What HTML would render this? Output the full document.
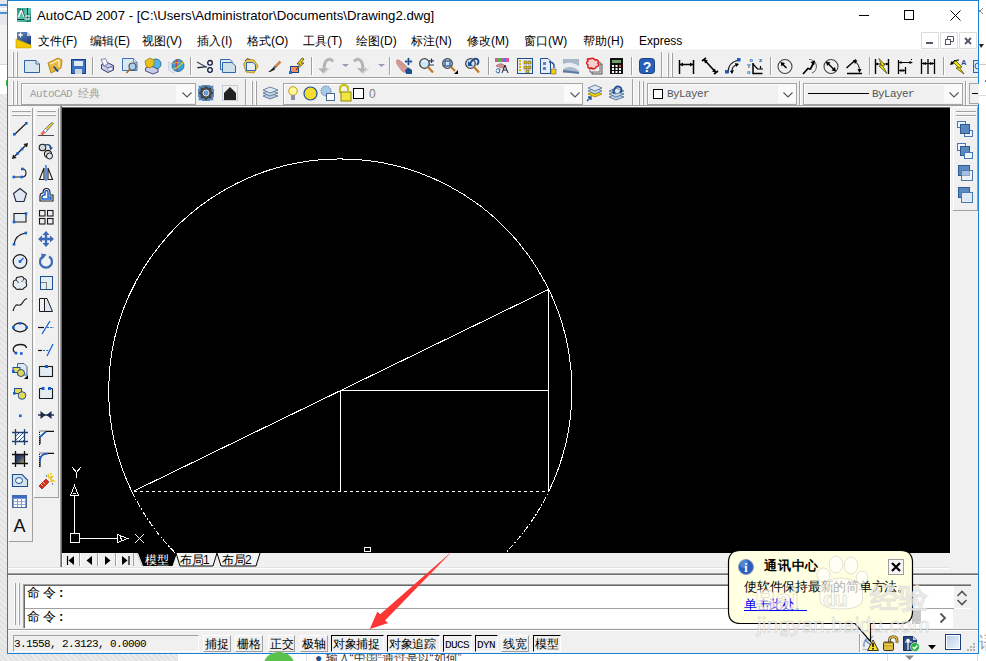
<!DOCTYPE html>
<html><head><meta charset="utf-8">
<style>
*{box-sizing:border-box;margin:0;padding:0}
html,body{width:986px;height:661px;overflow:hidden;background:#fff;font-family:"Liberation Sans",sans-serif;position:relative}
.a{position:absolute}
.t{white-space:nowrap;line-height:1}
svg{overflow:visible}
</style></head><body>

<div class="a" style="left:0px;top:0px;width:7px;height:661px;background:repeating-linear-gradient(45deg,#e2e2e2 0 2px,#ececec 2px 4px)"></div>
<div class="a" style="left:0px;top:0px;width:7px;height:25px;background:#e6e8ec"></div>
<div class="a" style="left:0px;top:25px;width:7px;height:39px;background:#f2f2f2"></div>
<div class="a" style="left:0px;top:64px;width:7px;height:30px;background:#fff"></div>
<div class="a" style="left:0px;top:64px;width:7px;height:1px;background:#d8d8d8"></div>
<div class="a" style="left:6px;top:80px;width:1px;height:6px;background:#3cb44a"></div>
<div class="a" style="left:0px;top:654px;width:178px;height:7px;background:repeating-linear-gradient(45deg,#e2e2e2 0 2px,#ececec 2px 4px)"></div>
<div class="a" style="left:0px;top:4px;width:7px;height:2px;background:#4a90d9"></div>
<div class="a" style="left:0px;top:8px;width:7px;height:2px;background:#fff"></div>
<div class="a" style="left:0px;top:12px;width:7px;height:2px;background:#4a90d9"></div>
<div class="a" style="left:979px;top:0px;width:7px;height:654px;background:#fff"></div>
<svg class="a" style="left:979px;top:8px" width="5" height="7" viewBox="0 0 5 7" ><path d="M-2 0 L4 6 M4 0 L-2 6" stroke="#888" stroke-width="1"/></svg>
<svg class="a" style="left:979px;top:44px" width="5" height="5" viewBox="0 0 5 5" ><path d="M0 0 H5 L2 4 Z" fill="#222"/></svg>
<div class="a" style="left:979px;top:64px;width:7px;height:1px;background:#ccc"></div>
<div class="a" style="left:979px;top:95px;width:7px;height:1px;background:#ddd"></div>
<div class="a" style="left:985px;top:80px;width:1px;height:2px;background:#e44"></div>
<div class="a" style="left:7px;top:0px;width:972px;height:654px;background:#f0f0f0"></div>
<div class="a" style="left:8px;top:1px;width:970px;height:48px;background:#fff"></div>
<div class="a" style="left:7px;top:0px;width:972px;height:1px;background:#1883d7"></div>
<div class="a" style="left:7px;top:0px;width:1px;height:654px;background:#1883d7"></div>
<div class="a" style="left:978px;top:0px;width:1px;height:654px;background:#1883d7"></div>
<div class="a" style="left:7px;top:653px;width:972px;height:1px;background:#1883d7"></div>
<svg class="a" style="left:17px;top:8px" width="14" height="14" viewBox="0 0 14 14" ><defs><linearGradient id="tg" x1="0" y1="0" x2="1" y2="1"><stop offset="0" stop-color="#1f8f7e"/><stop offset="0.5" stop-color="#5cc8b4"/><stop offset="1" stop-color="#1a8070"/></linearGradient></defs><rect x="0" y="0" width="14" height="14" fill="url(#tg)"/><path d="M1.5 9 L4.5 2 L7.5 9" stroke="#fff" stroke-width="1.6" fill="none"/><path d="M3 2 L5 1 L8 9" stroke="#0a3a30" stroke-width="0.8" fill="none"/><path d="M0 11.5 H7 M10.5 0 V7 M10.5 13 V14 M8 9.5 H14" stroke="#0a3a30" stroke-width="1"/><rect x="8.5" y="7.5" width="4" height="4" fill="#fff"/><rect x="9.5" y="8.5" width="2" height="2" fill="#0a3a30"/></svg>
<div class="a t" style="left:37px;top:9px;font-size:13.2px;color:#000">AutoCAD 2007 - [C:\Users\Administrator\Documents\Drawing2.dwg]</div>
<div class="a" style="left:859px;top:15px;width:10px;height:1px;background:#000"></div>
<div class="a" style="left:904px;top:10px;width:10px;height:10px;border:1px solid #000"></div>
<svg class="a" style="left:950px;top:10px" width="11" height="11" viewBox="0 0 11 11" ><path d="M0.5 0.5 L10.5 10.5 M10.5 0.5 L0.5 10.5" stroke="#000" stroke-width="1"/></svg>
<svg class="a" style="left:16px;top:32px" width="15" height="16" viewBox="0 0 15 16" ><defs><linearGradient id="mg" x1="0" y1="0" x2="0.6" y2="1"><stop offset="0" stop-color="#6a8ec0"/><stop offset="1" stop-color="#1d3f80"/></linearGradient></defs><path d="M1 0 H11 L15 4 V13 H1 Z" fill="url(#mg)"/><path d="M11 0 V4 H15 Z" fill="#c8d0dc"/><path d="M4.5 0.5 V5.5 M2 3 H7" stroke="#fff" stroke-width="1"/><circle cx="4.5" cy="3" r="1.3" fill="#fff"/><path d="M0 7 L15 13 V16 H0 Z" fill="#f2c800" stroke="#c09a00" stroke-width="0.6"/></svg>
<div class="a t" style="left:38px;top:35px;font-size:12px;color:#000">文件(F)</div>
<div class="a t" style="left:90px;top:35px;font-size:12px;color:#000">编辑(E)</div>
<div class="a t" style="left:142px;top:35px;font-size:12px;color:#000">视图(V)</div>
<div class="a t" style="left:197px;top:35px;font-size:12px;color:#000">插入(I)</div>
<div class="a t" style="left:247px;top:35px;font-size:12px;color:#000">格式(O)</div>
<div class="a t" style="left:303px;top:35px;font-size:12px;color:#000">工具(T)</div>
<div class="a t" style="left:356px;top:35px;font-size:12px;color:#000">绘图(D)</div>
<div class="a t" style="left:411px;top:35px;font-size:12px;color:#000">标注(N)</div>
<div class="a t" style="left:467px;top:35px;font-size:12px;color:#000">修改(M)</div>
<div class="a t" style="left:524px;top:35px;font-size:12px;color:#000">窗口(W)</div>
<div class="a t" style="left:583px;top:35px;font-size:12px;color:#000">帮助(H)</div>
<div class="a t" style="left:639px;top:35px;font-size:12px;color:#000">Express</div>
<div class="a" style="left:921px;top:32px;width:18px;height:17px;background:#fff;border:1px solid #dcdcdc"></div>
<div class="a" style="left:940px;top:32px;width:18px;height:17px;background:#fff;border:1px solid #dcdcdc"></div>
<div class="a" style="left:959px;top:32px;width:18px;height:17px;background:#fff;border:1px solid #dcdcdc"></div>
<div class="a" style="left:926px;top:42px;width:7px;height:2px;background:#556"></div>
<svg class="a" style="left:945px;top:36px" width="9" height="9" viewBox="0 0 9 9" ><rect x="0.5" y="3.5" width="5" height="5" fill="none" stroke="#556" stroke-width="1"/><path d="M2.5 3.5 V0.5 H8.5 V5.5 H5.5" fill="none" stroke="#556"/></svg>
<svg class="a" style="left:964px;top:37px" width="8" height="8" viewBox="0 0 8 8" ><path d="M1 1 L7 7 M7 1 L1 7" stroke="#556" stroke-width="1.8"/></svg>
<div class="a" style="left:8px;top:49px;width:970px;height:59px;background:#f0f0f0"></div>
<div class="a" style="left:8px;top:49px;width:970px;height:1px;background:#f7f7f7"></div>
<div class="a" style="left:8px;top:77px;width:970px;height:1px;background:#a0a0a0"></div>
<div class="a" style="left:8px;top:78px;width:970px;height:1px;background:#fff"></div>
<div class="a" style="left:8px;top:105px;width:970px;height:1px;background:#a0a0a0"></div>
<div class="a" style="left:8px;top:106px;width:970px;height:2px;background:#f7f7f7"></div>
<div class="a" style="left:12px;top:52px;width:1px;height:25px;background:#fff"></div>
<div class="a" style="left:13px;top:52px;width:1px;height:25px;background:#a0a0a0"></div>
<div class="a" style="left:16px;top:52px;width:1px;height:25px;background:#fff"></div>
<div class="a" style="left:17px;top:52px;width:1px;height:25px;background:#a0a0a0"></div>
<svg class="a" style="left:24px;top:60px" width="16" height="16" viewBox="0 0 16 16" ><path d="M0.5 0.5 H12 L15.5 4 V12.5 H0.5 Z" fill="#d8e8ee" stroke="#2f64ad"/><path d="M12 0.5 V4 H15.5" fill="#fff" stroke="#2f64ad"/></svg>
<svg class="a" style="left:47px;top:58px" width="16" height="16" viewBox="0 0 16 16" ><path d="M1 5 L11 0 L15 2 L14 10 L4 15 Z" fill="#e9b93c" stroke="#b8891a"/><path d="M3 6 L12 2 L12 9" fill="none" stroke="#fff"/><path d="M6 9 Q8 7 9 10 L12 13 L10 14 Z" fill="#1f4e8a"/></svg>
<svg class="a" style="left:71px;top:59px" width="16" height="16" viewBox="0 0 16 16" ><rect x="0.5" y="0.5" width="14" height="14" fill="#3b72c4" stroke="#1d3f8a"/><rect x="3" y="2" width="9" height="5" fill="#dfe9f5"/><rect x="4" y="10" width="7" height="5" fill="#cfd8e0"/></svg>
<div class="a" style="left:92px;top:57px;width:1px;height:18px;background:#a0a0a0"></div>
<div class="a" style="left:93px;top:57px;width:1px;height:18px;background:#fff"></div>
<svg class="a" style="left:100px;top:58px" width="16" height="16" viewBox="0 0 16 16" ><path d="M1.5 6.5 L6 4 L13.5 7.5 L13.5 12 L8 14.5 L1.5 11 Z" fill="#c8cce8" stroke="#3a3f78" stroke-width="1"/><path d="M2 6.5 L8 10 L13.5 7.5" fill="none" stroke="#5a5f98" stroke-width="0.8"/><path d="M1 1.5 L5.5 0.5 L8 6 L4 8 Z" fill="#f4f4fa" stroke="#6a6fa0" stroke-width="0.8"/><path d="M7 11 L12 9 L13 11.5 L9 13 Z" fill="#fff" stroke="#6a6fa0" stroke-width="0.6"/></svg>
<svg class="a" style="left:122px;top:58px" width="16" height="16" viewBox="0 0 16 16" ><path d="M0.5 0.5 H11.5 L15 4 V12.5 H0.5 Z" fill="#dae8f0" stroke="#3a72b8"/><path d="M11.5 0.5 V4 H15" fill="#fff" stroke="#3a72b8" stroke-width="0.8"/><circle cx="10.5" cy="8.5" r="3.5" fill="#a8d0f0" stroke="#555" stroke-width="1.2"/><path d="M8 11 L4.5 15" stroke="#b06a28" stroke-width="1.8"/></svg>
<svg class="a" style="left:145px;top:58px" width="16" height="16" viewBox="0 0 16 16" ><circle cx="11" cy="6" r="5" fill="#50b8e8" stroke="#2a5a80" stroke-width="0.8"/><path d="M0.5 10 L6 8 L13 11 L13 14 L8 16 L0.5 13 Z" fill="#c8cce8" stroke="#3a3f78" stroke-width="0.9"/><path d="M0 3 L5 0 L9 2 L9 7 L5 10 L1 8 Z" fill="#e8c020" stroke="#a08000" stroke-width="0.8"/></svg>
<svg class="a" style="left:168px;top:58px" width="16" height="16" viewBox="0 0 16 16" ><path d="M0.5 4 L6 7 V15.5 L0.5 12 Z" fill="#dde6f4" stroke="#b8c4d8" stroke-width="0.6"/><circle cx="10" cy="7.5" r="6" fill="#3aa0d8" stroke="#1a5a90" stroke-width="0.8"/><path d="M9 1.5 Q7 8 10 13.5" stroke="#d83030" stroke-width="1.1" fill="none"/><path d="M4.5 6 Q10 3 15.5 6" stroke="#f0a030" stroke-width="1.1" fill="none"/><path d="M5 11 Q11 10 15 4" stroke="#c8e020" stroke-width="1.1" fill="none"/></svg>
<div class="a" style="left:190px;top:57px;width:1px;height:18px;background:#a0a0a0"></div>
<div class="a" style="left:191px;top:57px;width:1px;height:18px;background:#fff"></div>
<svg class="a" style="left:197px;top:60px" width="16" height="16" viewBox="0 0 16 16" ><path d="M0 2 L10 7.5 M0 7.5 L10 7" stroke="#334060" stroke-width="1.1"/><path d="M1 7 L10 6.5 L1 8.5 Z" fill="#223"/><circle cx="13" cy="2.8" r="2.3" fill="none" stroke="#111a40" stroke-width="1.3"/><circle cx="13" cy="10" r="2.3" fill="none" stroke="#111a40" stroke-width="1.3"/></svg>
<svg class="a" style="left:220px;top:59px" width="16" height="16" viewBox="0 0 16 16" ><path d="M0.5 0.5 H10 L12 2.5 V10.5 H0.5 Z" fill="#e0ecf0" stroke="#2f64ad"/><path d="M2.5 3.5 H12 L15.5 7 V13.5 H2.5 Z" fill="#cfe0e8" stroke="#2f64ad"/></svg>
<svg class="a" style="left:243px;top:58px" width="16" height="16" viewBox="0 0 16 16" ><path d="M4 1 L11 2 L15 8 L11 15 L3 14 L0.5 6 Z" fill="#e8c858" stroke="#b89020" stroke-width="0.9"/><path d="M2 3 L4 0.5 L7 1.5" stroke="#444" fill="none" stroke-width="0.8"/><path d="M3.5 4.5 H10 L12.5 7 V12.5 H3.5 Z" fill="#e4f0f4" stroke="#2f64ad"/></svg>
<svg class="a" style="left:268px;top:61px" width="16" height="16" viewBox="0 0 16 16" ><path d="M12.5 0.5 L7 6" stroke="#c88848" stroke-width="2.6"/><path d="M7.5 5.5 L5.5 7.5" stroke="#3a5a70" stroke-width="2"/><path d="M5.5 6.5 L1 10.5 L0 11 L2 11 L7 8.5 Z" fill="#1a1a1a"/></svg>
<svg class="a" style="left:289px;top:58px" width="16" height="16" viewBox="0 0 16 16" ><rect x="1.5" y="8.5" width="8" height="6" fill="#f89058" stroke="#1d3f8a"/><rect x="0" y="13" width="3" height="3" fill="#1070e0"/><path d="M13 0 L8 6 H11 L7 12 L15 5 H12 L15 1 Z" fill="#f0d000" stroke="#333" stroke-width="0.7"/></svg>
<div class="a" style="left:311px;top:57px;width:1px;height:18px;background:#a0a0a0"></div>
<div class="a" style="left:312px;top:57px;width:1px;height:18px;background:#fff"></div>
<svg class="a" style="left:318px;top:58px" width="16" height="16" viewBox="0 0 16 16" ><path d="M15 3.5 Q12 -0.5 8.5 2.5 Q6 5 6.2 10.5" stroke="#b4b4b8" stroke-width="3" fill="none"/><path d="M0 10.5 L12 10 L6 16 Z" fill="#b4b4b8"/><path d="M6 15 L11 10" stroke="#fff" stroke-width="0.8"/></svg>
<svg class="a" style="left:342px;top:64px" width="7" height="4" viewBox="0 0 7 4" ><path d="M0 0 H7 L3.5 3 Z" fill="#9a9ab8"/></svg>
<svg class="a" style="left:353px;top:58px" width="16" height="16" viewBox="0 0 16 16" ><path d="M1 3.5 Q4 -0.5 7.5 2.5 Q10 5 9.8 10.5" stroke="#b4b4b8" stroke-width="3" fill="none"/><path d="M16 10.5 L4 10 L10 16 Z" fill="#b4b4b8"/><path d="M10 15 L15 10" stroke="#fff" stroke-width="0.8"/></svg>
<svg class="a" style="left:378px;top:64px" width="7" height="4" viewBox="0 0 7 4" ><path d="M0 0 H7 L3.5 3 Z" fill="#9a9ab8"/></svg>
<div class="a" style="left:389px;top:57px;width:1px;height:18px;background:#a0a0a0"></div>
<div class="a" style="left:390px;top:57px;width:1px;height:18px;background:#fff"></div>
<svg class="a" style="left:396px;top:58px" width="16" height="16" viewBox="0 0 16 16" ><path d="M0.5 3 Q1 1 3 2 L10 8 L12 10 L10 14 Q8 15 6 13 L1 6 Z" fill="#d8a09a" stroke="#b07870" stroke-width="0.7"/><path d="M2 4 L8 9 M3.5 2.8 L9.5 7.8" stroke="#b07870" stroke-width="0.5"/><path d="M9 12 L12.5 9.5 L16 12 V16 H10 Z" fill="#1d4f91"/><path d="M12.5 0 V7 M9 3.5 H16" stroke="#1d4f91" stroke-width="1.3"/><path d="M12.5 -0.5 L11 1.5 H14 Z M12.5 7.5 L11 5.5 H14 Z M8.5 3.5 L10.5 2 V5 Z M16.5 3.5 L14.5 2 V5 Z" fill="#1d4f91"/></svg>
<svg class="a" style="left:419px;top:58px" width="16" height="16" viewBox="0 0 16 16" ><circle cx="5.5" cy="5.5" r="4.8" fill="#cfe4f5" stroke="#444" stroke-width="1.3"/><path d="M3 3.5 Q5 2 7 3" stroke="#fff" fill="none"/><path d="M8.8 8.8 L14 14.5" stroke="#c07828" stroke-width="2.2"/><path d="M12.5 0.5 V5 M10 2.8 H15 M10 7 H15" stroke="#1d3f70" stroke-width="1.2"/></svg>
<svg class="a" style="left:442px;top:58px" width="16" height="16" viewBox="0 0 16 16" ><circle cx="5.5" cy="5.5" r="4.8" fill="#cfe4f5" stroke="#444" stroke-width="1.3"/><rect x="3" y="3" width="5" height="5" fill="none" stroke="#1d4f91" stroke-width="1.2"/><path d="M8.8 8.8 L13 13" stroke="#c07828" stroke-width="2.2"/><path d="M12 16 L16 12 V16 Z" fill="#000"/></svg>
<svg class="a" style="left:465px;top:58px" width="16" height="16" viewBox="0 0 16 16" ><circle cx="5.5" cy="5.5" r="4.8" fill="#cfe4f5" stroke="#444" stroke-width="1.3"/><path d="M8.8 8.8 L14 14.5" stroke="#c07828" stroke-width="2.2"/><path d="M5 6 Q8 0 12 1 Q15 3 12 7" stroke="#1d4f91" stroke-width="2" fill="none"/><path d="M3 3 L8 8 L3 8 Z" fill="#1d4f91"/></svg>
<div class="a" style="left:488px;top:57px;width:1px;height:18px;background:#a0a0a0"></div>
<div class="a" style="left:489px;top:57px;width:1px;height:18px;background:#fff"></div>
<svg class="a" style="left:494px;top:58px" width="16" height="16" viewBox="0 0 16 16" ><rect x="1" y="0" width="14" height="4" fill="#e050a0"/><rect x="4" y="0" width="3" height="4" fill="#40c040"/><rect x="9" y="0" width="3" height="4" fill="#4080f0"/><path d="M2 8 Q6 4 10 7 L12 9 L9 10 Z" fill="#d89090" stroke="#905050" stroke-width="0.6"/><path d="M2 12 Q3 10 6 11 L5 15 Q2 15 2 13" fill="none" stroke="#2f64ad"/><path d="M8 15 L11 7 L14 15 M9 12 H13" stroke="#223" fill="none"/></svg>
<svg class="a" style="left:517px;top:58px" width="16" height="16" viewBox="0 0 16 16" ><rect x="0.5" y="0.5" width="15" height="15" fill="#e8eef8" stroke="#1d4f91"/><path d="M3 2 V14" stroke="#e8b000" stroke-width="2" stroke-dasharray="2 1"/><rect x="7" y="3" width="3" height="3" fill="#e8c000" stroke="#445" stroke-width="0.5"/><rect x="11" y="3" width="3" height="3" fill="#e8c000" stroke="#445" stroke-width="0.5"/><rect x="7" y="8" width="3" height="3" fill="#e8c000" stroke="#445" stroke-width="0.5"/><rect x="11" y="8" width="3" height="3" fill="#e8c000" stroke="#445" stroke-width="0.5"/><rect x="9" y="12" width="3" height="3" fill="#e8c000" stroke="#445" stroke-width="0.5"/></svg>
<svg class="a" style="left:540px;top:58px" width="16" height="16" viewBox="0 0 16 16" ><path d="M0.5 0.5 H8 L10.5 3 V15.5 H0.5 Z" fill="#e8eef8" stroke="#1d4f91"/><rect x="3" y="4" width="3" height="3" fill="#6080c0"/><rect x="3" y="9" width="3" height="3" fill="#6080c0"/><path d="M9 4 Q15 4 14 10" stroke="#1d4f91" stroke-width="1.5" fill="none"/><rect x="11" y="11" width="5" height="5" fill="#f0d000" stroke="#665" stroke-width="0.6"/></svg>
<svg class="a" style="left:563px;top:58px" width="16" height="16" viewBox="0 0 16 16" ><rect x="0" y="1" width="16" height="14" fill="#a8b8c8"/><path d="M0 6 Q8 2 16 8 L16 13 Q8 6 0 11 Z" fill="#e8eef4"/><path d="M0 13 L16 15" stroke="#5a7aa0" stroke-width="2"/></svg>
<svg class="a" style="left:586px;top:58px" width="16" height="16" viewBox="0 0 16 16" ><rect x="6" y="6" width="10" height="10" fill="#ddd" stroke="#333" stroke-width="0.8"/><rect x="4" y="4" width="10" height="10" fill="#eee" stroke="#555" stroke-width="0.8"/><path d="M2 3 Q0 0 4 1 Q7 -1 9 2 Q13 1 12 5 Q14 8 10 9 Q9 12 5 10 Q1 11 2 7 Q-1 5 2 3 Z" fill="#f4d0d0" stroke="#e01010" stroke-width="1.4"/></svg>
<svg class="a" style="left:609px;top:58px" width="16" height="16" viewBox="0 0 16 16" ><rect x="1" y="0" width="13" height="16" fill="#111"/><rect x="3" y="2" width="9" height="3" fill="#70a070"/><g fill="#fff"><rect x="3" y="7" width="2" height="2"/><rect x="6.5" y="7" width="2" height="2"/><rect x="10" y="7" width="2" height="2" fill="#f44"/><rect x="3" y="10" width="2" height="2"/><rect x="6.5" y="10" width="2" height="2"/><rect x="10" y="10" width="2" height="2"/><rect x="3" y="13" width="2" height="2"/><rect x="6.5" y="13" width="2" height="2"/><rect x="10" y="13" width="2" height="2"/></g></svg>
<div class="a" style="left:631px;top:57px;width:1px;height:18px;background:#a0a0a0"></div>
<div class="a" style="left:632px;top:57px;width:1px;height:18px;background:#fff"></div>
<svg class="a" style="left:639px;top:58px" width="16" height="16" viewBox="0 0 16 16" ><rect x="0.5" y="0.5" width="15" height="15" rx="3" fill="#2760b8" stroke="#1a3f80"/><text x="8" y="13.5" font-family="Liberation Sans" font-weight="bold" font-size="14" fill="#fff" text-anchor="middle">?</text></svg>
<div class="a" style="left:661px;top:52px;width:1px;height:25px;background:#a0a0a0"></div>
<div class="a" style="left:662px;top:52px;width:1px;height:25px;background:#fff"></div>
<div class="a" style="left:667px;top:53px;width:1px;height:24px;background:#fff"></div>
<div class="a" style="left:668px;top:53px;width:1px;height:24px;background:#a0a0a0"></div>
<div class="a" style="left:671px;top:53px;width:1px;height:24px;background:#fff"></div>
<div class="a" style="left:672px;top:53px;width:1px;height:24px;background:#a0a0a0"></div>
<svg class="a" style="left:678px;top:58px" width="16" height="16" viewBox="0 0 16 16" ><path d="M1.5 2 V16 M15.5 2 V16 M1.5 6.5 H15.5" stroke="#000" stroke-width="1.5"/><path d="M2 6.5 L5 4.5 V8.5 Z M15 6.5 L12 4.5 V8.5 Z" fill="#000"/></svg>
<svg class="a" style="left:702px;top:58px" width="16" height="16" viewBox="0 0 16 16" ><path d="M0 3 L4 0 M12 16 L16 13 M2 1.5 L14 14.5" stroke="#000" stroke-width="1.6"/><path d="M2 1.5 L6 2.5 L3 5.5 Z M14 14.5 L10 13.5 L13 10.5 Z" fill="#000"/></svg>
<svg class="a" style="left:725px;top:58px" width="16" height="16" viewBox="0 0 16 16" ><path d="M3 15 Q3 4 14 2" stroke="#222" stroke-width="1.2" fill="none"/><path d="M7 15 Q6 8 13 6" stroke="#222" stroke-width="1.2" fill="none"/><rect x="0" y="12" width="3.5" height="3.5" fill="#1858c8"/><rect x="12" y="0" width="3.5" height="3.5" fill="#1858c8"/><path d="M10 5 L14 6 L11 9 Z M5 13 L7 16 L9 12 Z" fill="#000"/></svg>
<svg class="a" style="left:747px;top:58px" width="16" height="16" viewBox="0 0 16 16" ><path d="M6 5 V15.5 H15.5" stroke="#000" stroke-width="1.5" fill="none"/><path d="M6 6 L10.5 11 H16 M13.5 8 V11.5" stroke="#000" stroke-width="1.2" fill="none"/><g fill="#1d4f91" font-size="5.5" font-weight="bold" font-family="Liberation Sans"><text x="2.5" y="4">o</text><text x="12" y="4">x</text><text x="0" y="10">Y</text><text x="0" y="16">o</text></g></svg>
<div class="a" style="left:770px;top:57px;width:1px;height:18px;background:#a0a0a0"></div>
<div class="a" style="left:771px;top:57px;width:1px;height:18px;background:#fff"></div>
<svg class="a" style="left:777px;top:58px" width="16" height="16" viewBox="0 0 16 16" ><circle cx="8" cy="8.5" r="7" fill="none" stroke="#444" stroke-width="1.1"/><path d="M9.5 10 L4.5 5" stroke="#000" stroke-width="1.5"/><path d="M3.5 4 L8 5 L4.5 8.5 Z" fill="#000"/></svg>
<svg class="a" style="left:801px;top:58px" width="16" height="16" viewBox="0 0 16 16" ><path d="M8 1.5 A7 7 0 0 1 11 15" stroke="#666" stroke-width="1.1" fill="none"/><path d="M2 16 L7 10.5 L9.5 11 L13 4" stroke="#000" stroke-width="1.7" fill="none"/><path d="M14 2.5 L9.5 4 L13 7.5 Z" fill="#000"/></svg>
<svg class="a" style="left:823px;top:58px" width="16" height="16" viewBox="0 0 16 16" ><circle cx="8" cy="8.5" r="7" fill="none" stroke="#444" stroke-width="1.1"/><path d="M4 4.5 L12 12.5" stroke="#000" stroke-width="1.5"/><path d="M3 3.5 L7.5 4.5 L4 8 Z M13 13.5 L8.5 12.5 L12 9 Z" fill="#000"/></svg>
<svg class="a" style="left:846px;top:58px" width="16" height="16" viewBox="0 0 16 16" ><path d="M0.5 10 L10 1.5 M1 15.5 H16" stroke="#000" stroke-width="1.4"/><path d="M8 3 Q14 6 13.5 14" stroke="#000" stroke-width="1" fill="none"/><path d="M7 2 L11.5 2.5 L9 6 Z M13.5 15 L11.5 11 H15.5 Z" fill="#000"/></svg>
<div class="a" style="left:869px;top:57px;width:1px;height:18px;background:#a0a0a0"></div>
<div class="a" style="left:870px;top:57px;width:1px;height:18px;background:#fff"></div>
<svg class="a" style="left:874px;top:58px" width="16" height="16" viewBox="0 0 16 16" ><path d="M1.5 1 V16 M14.5 1 V16" stroke="#000" stroke-width="1.4"/><path d="M1 6 H15" stroke="#000" stroke-width="1"/><path d="M1.5 6 L4 4.5 V7.5 Z M14.5 6 L12 4.5 V7.5 Z" fill="#000"/><path d="M5 0.5 L11 7 L8.5 7.5 L13 15.5 L5 8 L7.5 7.5 Z" fill="#f0e000" stroke="#3a3a00" stroke-width="0.7"/></svg>
<svg class="a" style="left:897px;top:58px" width="16" height="16" viewBox="0 0 16 16" ><path d="M1.5 2 V16 M8.5 9 V16" stroke="#000" stroke-width="1.3"/><path d="M1.5 4.5 H15 M1.5 12.5 H8.5 M14.5 1 V2" stroke="#000" stroke-width="1"/><path d="M16 4.5 L12.5 3 V6 Z M8.5 12.5 L5.5 11 V14 Z M1.5 4.5 L4.5 3 V6 Z M1.5 12.5 L4.5 11 V14 Z" fill="#000"/></svg>
<svg class="a" style="left:920px;top:58px" width="16" height="16" viewBox="0 0 16 16" ><path d="M1.5 1 V16 M8 1 V16 M14.5 1 V16" stroke="#000" stroke-width="1.3"/><path d="M1 5.5 H15" stroke="#000" stroke-width="1"/><path d="M1.5 5.5 L4.5 4 V7 Z M8 5.5 L5 4 V7 Z M8 5.5 L11 4 V7 Z M14.5 5.5 L11.5 4 V7 Z" fill="#000"/></svg>
<div class="a" style="left:943px;top:57px;width:1px;height:18px;background:#a0a0a0"></div>
<div class="a" style="left:944px;top:57px;width:1px;height:18px;background:#fff"></div>
<svg class="a" style="left:950px;top:58px" width="16" height="16" viewBox="0 0 16 16" ><path d="M5 2 L12 9 L9.5 9.5 L14 16 L6 10 L8.5 9.5 L3 4 Z" fill="#f0e000" stroke="#3a3a00" stroke-width="0.7"/><path d="M1 6 Q4 2 9 2" stroke="#000" stroke-width="1.2" fill="none"/><path d="M0 7 L1.5 3 L4 6 Z" fill="#000"/><text x="11" y="6.5" font-size="7.5" font-family="Liberation Sans" font-weight="bold" fill="#1d4f91">A</text></svg>
<svg class="a" style="left:973px;top:58px;overflow:hidden" width="5" height="16" viewBox="0 0 5 16"><rect x="0.5" y="2.5" width="8" height="12" fill="#dde8f4" stroke="#2f64ad"/><circle cx="5" cy="8" r="3" fill="none" stroke="#2f64ad"/></svg>
<div class="a" style="left:12px;top:81px;width:1px;height:24px;background:#fff"></div>
<div class="a" style="left:13px;top:81px;width:1px;height:24px;background:#a0a0a0"></div>
<div class="a" style="left:16px;top:81px;width:1px;height:24px;background:#fff"></div>
<div class="a" style="left:17px;top:81px;width:1px;height:24px;background:#a0a0a0"></div>
<div class="a" style="left:21px;top:83px;width:175px;height:22px;border:1px solid #a5a5a5;background:#f0f0f0;box-shadow:inset 1px 1px 0 #fff"></div>
<svg class="a" style="left:179px;top:90px" width="10" height="6" viewBox="0 0 10 6" ><path d="M0.5 0.5 L5 5 L9.5 0.5" stroke="#555" fill="none" stroke-width="1.1"/></svg>
<div class="a" style="left:176px;top:84px;width:19px;height:19px;background:#fafafa"></div>
<svg class="a" style="left:182px;top:92px" width="9" height="6" viewBox="0 0 9 6" ><path d="M0.5 0.5 L5 5 L9.5 0.5" stroke="#555" fill="none" stroke-width="1.1"/></svg>
<div class="a t" style="left:30px;top:89px;font-family:'Liberation Mono',monospace;font-size:11px;color:#a0a0a0;letter-spacing:-0.6px">AutoCAD <span style="letter-spacing:0">经典</span></div>
<svg class="a" style="left:198px;top:85px" width="16" height="16" viewBox="0 0 16 16" ><rect x="0" y="0" width="16" height="16" fill="#5a86b8"/><path d="M0 0 H4 V1 H1 V4 H0 Z M16 0 H12 V1 H15 V4 H16 Z M0 16 H4 V15 H1 V12 H0 Z M16 16 H12 V15 H15 V12 H16 Z" fill="#c8d8e8"/><path d="M15.00 8.00 L12.80 9.99 L12.95 12.95 L9.99 12.80 L8.00 15.00 L6.01 12.80 L3.05 12.95 L3.20 9.99 L1.00 8.00 L3.20 6.01 L3.05 3.05 L6.01 3.20 L8.00 1.00 L9.99 3.20 L12.95 3.05 L12.80 6.01 Z" fill="#4a4a4a" stroke="#2a2a2a" stroke-width="0.5"/><circle cx="8" cy="8" r="3" fill="#6a9ad8" stroke="#ddd" stroke-width="1"/></svg>
<svg class="a" style="left:222px;top:85px" width="16" height="16" viewBox="0 0 16 16" ><rect x="0.5" y="0.5" width="15" height="15" fill="none" stroke="#9ab" stroke-dasharray="1 1"/><path d="M2 8 L8 2 L14 8 V15 H2 Z" fill="#222"/></svg>
<div class="a" style="left:245px;top:79px;width:1px;height:26px;background:#a0a0a0"></div>
<div class="a" style="left:246px;top:79px;width:1px;height:26px;background:#fff"></div>
<div class="a" style="left:251px;top:81px;width:1px;height:24px;background:#fff"></div>
<div class="a" style="left:252px;top:81px;width:1px;height:24px;background:#a0a0a0"></div>
<div class="a" style="left:255px;top:81px;width:1px;height:24px;background:#fff"></div>
<div class="a" style="left:256px;top:81px;width:1px;height:24px;background:#a0a0a0"></div>
<svg class="a" style="left:262px;top:85px" width="17" height="16" viewBox="0 0 17 16" ><path d="M1 11 L8 14 L16 11 L8 8 Z" fill="#b8cde0" stroke="#4a6a90" stroke-width="0.8"/><path d="M1 8 L8 11 L16 8 L8 5 Z" fill="#c8d8e8" stroke="#4a6a90" stroke-width="0.8"/><path d="M1 5 L8 8 L16 5 L8 2 Z" fill="#dde8f0" stroke="#4a6a90" stroke-width="0.8"/></svg>
<div class="a" style="left:283px;top:83px;width:300px;height:22px;border:1px solid #a5a5a5;background:#f0f0f0;box-shadow:inset 1px 1px 0 #fff"></div>
<svg class="a" style="left:566px;top:90px" width="10" height="6" viewBox="0 0 10 6" ><path d="M0.5 0.5 L5 5 L9.5 0.5" stroke="#555" fill="none" stroke-width="1.1"/></svg>
<div class="a" style="left:564px;top:84px;width:18px;height:19px;background:#fafafa"></div>
<svg class="a" style="left:570px;top:92px" width="9" height="6" viewBox="0 0 9 6" ><path d="M0.5 0.5 L5 5 L9.5 0.5" stroke="#555" fill="none" stroke-width="1.1"/></svg>
<svg class="a" style="left:288px;top:85px" width="10" height="17" viewBox="0 0 10 17" ><circle cx="5" cy="6" r="4.3" fill="#fff7a0" stroke="#c8a000"/><rect x="3" y="10" width="4" height="5" fill="#8890a8"/></svg>
<svg class="a" style="left:303px;top:86px" width="15" height="15" viewBox="0 0 15 15" ><circle cx="7.5" cy="7.5" r="6.5" fill="#f2dc30" stroke="#1d4f91" stroke-width="1.2"/></svg>
<svg class="a" style="left:320px;top:85px" width="15" height="17" viewBox="0 0 15 17" ><circle cx="6" cy="6" r="5" fill="#a8c8e8" stroke="#5a80b0" stroke-dasharray="1.5 1"/><rect x="6.5" y="8.5" width="8" height="7" fill="#fff" stroke="#4a6a90"/></svg>
<svg class="a" style="left:338px;top:85px" width="15" height="17" viewBox="0 0 15 17" ><path d="M2 8 V4 Q2 0 6 0 Q10 0 10 4 V6" fill="none" stroke="#c8c000" stroke-width="2"/><rect x="3" y="7" width="10" height="9" fill="#f0e840" stroke="#908000"/></svg>
<div class="a" style="left:353px;top:88px;width:11px;height:11px;border:1.5px solid #000;background:#fff"></div>
<div class="a t" style="left:369px;top:88px;font-size:12px;color:#808080">0</div>
<svg class="a" style="left:586px;top:85px" width="17" height="17" viewBox="0 0 17 17" ><path d="M2 9 L9 12 L16 9 L9 6 Z" fill="#f0d000" stroke="#a08000" stroke-width="0.8"/><path d="M2 6 L9 9 L16 6 L9 3 Z" fill="#c8d8e8" stroke="#4a6a90" stroke-width="0.8"/><path d="M2 3 L9 6 L16 3 L9 0 Z" fill="#dde8f0" stroke="#4a6a90" stroke-width="0.8"/><path d="M1 16 L5 12 M2 12 H5 V15" stroke="#1d4f91" stroke-width="1.3" fill="none"/></svg>
<svg class="a" style="left:608px;top:85px" width="17" height="17" viewBox="0 0 17 17" ><path d="M1 12 L8 15 L16 12 L8 9 Z" fill="#b8cde0" stroke="#4a6a90" stroke-width="0.8"/><path d="M1 9 L8 12 L16 9 L8 6 Z" fill="#c8d8e8" stroke="#4a6a90" stroke-width="0.8"/><path d="M1 6 L8 9 L16 6 L8 3 Z" fill="#dde8f0" stroke="#4a6a90" stroke-width="0.8"/><path d="M6 6 Q7 0 12 2 Q15 4 12 8" stroke="#1d4f91" stroke-width="1.8" fill="none"/><path d="M4 4 L8 8 L5 9 Z" fill="#1d4f91"/></svg>
<div class="a" style="left:632px;top:79px;width:1px;height:26px;background:#a0a0a0"></div>
<div class="a" style="left:633px;top:79px;width:1px;height:26px;background:#fff"></div>
<div class="a" style="left:638px;top:81px;width:1px;height:24px;background:#fff"></div>
<div class="a" style="left:639px;top:81px;width:1px;height:24px;background:#a0a0a0"></div>
<div class="a" style="left:642px;top:81px;width:1px;height:24px;background:#fff"></div>
<div class="a" style="left:643px;top:81px;width:1px;height:24px;background:#a0a0a0"></div>
<div class="a" style="left:647px;top:83px;width:150px;height:22px;border:1px solid #a5a5a5;background:#f0f0f0;box-shadow:inset 1px 1px 0 #fff"></div>
<svg class="a" style="left:780px;top:90px" width="10" height="6" viewBox="0 0 10 6" ><path d="M0.5 0.5 L5 5 L9.5 0.5" stroke="#555" fill="none" stroke-width="1.1"/></svg>
<div class="a" style="left:778px;top:84px;width:18px;height:19px;background:#fafafa"></div>
<svg class="a" style="left:783px;top:92px" width="9" height="6" viewBox="0 0 9 6" ><path d="M0.5 0.5 L5 5 L9.5 0.5" stroke="#555" fill="none" stroke-width="1.1"/></svg>
<div class="a" style="left:653px;top:89px;width:10px;height:10px;border:1.5px solid #000;background:#fff"></div>
<div class="a t" style="left:667px;top:89px;font-family:'Liberation Mono',monospace;font-size:11px;color:#555;letter-spacing:-0.6px">ByLayer</div>
<div class="a" style="left:799px;top:81px;width:1px;height:24px;background:#a0a0a0"></div>
<div class="a" style="left:800px;top:81px;width:1px;height:24px;background:#fff"></div>
<div class="a" style="left:803px;top:83px;width:160px;height:22px;border:1px solid #a5a5a5;background:#f0f0f0;box-shadow:inset 1px 1px 0 #fff"></div>
<svg class="a" style="left:946px;top:90px" width="10" height="6" viewBox="0 0 10 6" ><path d="M0.5 0.5 L5 5 L9.5 0.5" stroke="#555" fill="none" stroke-width="1.1"/></svg>
<div class="a" style="left:944px;top:84px;width:18px;height:19px;background:#fafafa"></div>
<svg class="a" style="left:949px;top:92px" width="9" height="6" viewBox="0 0 9 6" ><path d="M0.5 0.5 L5 5 L9.5 0.5" stroke="#555" fill="none" stroke-width="1.1"/></svg>
<div class="a" style="left:808px;top:93px;width:61px;height:1px;background:#000"></div>
<div class="a t" style="left:872px;top:89px;font-family:'Liberation Mono',monospace;font-size:11px;color:#555;letter-spacing:-0.6px">ByLayer</div>
<div class="a" style="left:965px;top:81px;width:1px;height:24px;background:#a0a0a0"></div>
<div class="a" style="left:966px;top:81px;width:1px;height:24px;background:#fff"></div>
<div class="a" style="left:969px;top:83px;width:10px;height:21px;border:1px solid #a5a5a5;border-right:none;background:#f0f0f0"></div>
<div class="a" style="left:972px;top:93px;width:6px;height:1px;background:#000"></div>
<div class="a" style="left:8px;top:108px;width:54px;height:438px;background:#f0f0f0"></div>
<div class="a" style="left:9px;top:108px;width:24px;height:434px;border-right:1px solid #a0a0a0;border-bottom:1px solid #a0a0a0;box-shadow:inset 1px 1px 0 #fff"></div>
<div class="a" style="left:34px;top:108px;width:25px;height:390px;border-right:1px solid #a0a0a0;border-bottom:1px solid #a0a0a0;box-shadow:inset 1px 1px 0 #fff"></div>
<div class="a" style="left:12px;top:110px;width:19px;height:1px;background:#fff"></div>
<div class="a" style="left:12px;top:111px;width:19px;height:1px;background:#a0a0a0"></div>
<div class="a" style="left:12px;top:114px;width:19px;height:1px;background:#fff"></div>
<div class="a" style="left:12px;top:115px;width:19px;height:1px;background:#a0a0a0"></div>
<div class="a" style="left:37px;top:110px;width:19px;height:1px;background:#fff"></div>
<div class="a" style="left:37px;top:111px;width:19px;height:1px;background:#a0a0a0"></div>
<div class="a" style="left:37px;top:114px;width:19px;height:1px;background:#fff"></div>
<div class="a" style="left:37px;top:115px;width:19px;height:1px;background:#a0a0a0"></div>
<div class="a" style="left:60px;top:106px;width:1px;height:462px;background:#a0a0a0"></div>
<div class="a" style="left:61px;top:106px;width:1px;height:462px;background:#696969"></div>
<svg class="a" style="left:12px;top:121px" width="16" height="16" viewBox="0 0 16 16" ><path d="M2.5 13.5 L14 2.5" stroke="#1a1a1a" stroke-width="1.2"/><rect x="1" y="12" width="2.6" height="2.6" fill="#1560d0"/><rect x="13" y="1" width="2.6" height="2.6" fill="#1560d0"/></svg>
<svg class="a" style="left:12px;top:143px" width="16" height="16" viewBox="0 0 16 16" ><path d="M1.5 14.5 L14.5 1.5" stroke="#1a1a1a" stroke-width="1.2"/><path d="M0 16 L1 11.5 L4.5 15 Z M16 0 L11.5 1 L15 4.5 Z" fill="#1a1a1a"/><rect x="4.5" y="9" width="2.6" height="2.6" fill="#1560d0"/><rect x="8.8" y="4.8" width="2.6" height="2.6" fill="#1560d0"/></svg>
<svg class="a" style="left:12px;top:165px" width="16" height="16" viewBox="0 0 16 16" ><path d="M2 12 H10 Q14 12 14 8 Q14 4 10.5 4" stroke="#1a1a1a" stroke-width="1.1" fill="none"/><rect x="0.5" y="10.7" width="2.6" height="2.6" fill="#1560d0"/><rect x="8.5" y="10.7" width="2.6" height="2.6" fill="#1560d0"/><rect x="9" y="2.7" width="2.6" height="2.6" fill="#1560d0"/></svg>
<svg class="a" style="left:12px;top:187px" width="16" height="16" viewBox="0 0 16 16" ><path d="M8 1.5 L14.5 6.5 L12 14.5 H4 L1.5 6.5 Z" fill="#dfe8f2" stroke="#222a3a" stroke-width="1.1"/></svg>
<svg class="a" style="left:12px;top:209px" width="16" height="16" viewBox="0 0 16 16" ><path d="M2 4.5 H14 V13 H2 Z" fill="#e4ecf4" stroke="#1a1a1a" stroke-width="1.1"/><rect x="0.7" y="11.7" width="2.6" height="2.6" fill="#1560d0"/><rect x="12.7" y="3.2" width="2.6" height="2.6" fill="#1560d0"/></svg>
<svg class="a" style="left:12px;top:231px" width="16" height="16" viewBox="0 0 16 16" ><path d="M2 13.5 Q3 4 13.5 2" stroke="#1a1a1a" stroke-width="1.1" fill="none"/><rect x="0.7" y="12" width="2.6" height="2.6" fill="#1560d0"/><rect x="12.5" y="0.7" width="2.6" height="2.6" fill="#1560d0"/></svg>
<svg class="a" style="left:12px;top:253px" width="16" height="16" viewBox="0 0 16 16" ><circle cx="8" cy="8.5" r="6.8" fill="#e8eef6" stroke="#1a1a1a" stroke-width="1.2"/><path d="M8 8.5 L11.5 5" stroke="#1560d0" stroke-width="1.2"/><rect x="6.7" y="7.2" width="2.6" height="2.6" fill="#1560d0"/></svg>
<svg class="a" style="left:12px;top:275px" width="16" height="16" viewBox="0 0 16 16" ><path d="M4 5 Q4 1.5 7.5 2 Q10.5 0.5 12 3.5 Q15.5 4.5 14 8 Q16 11.5 12.5 12.5 Q11 15.5 7.5 14 Q4.5 15.5 3 12.5 Q0 11 1.5 8 Q0.5 5.5 4 5 Z" fill="#e4ecf4" stroke="#1a1a1a" stroke-width="1.1"/><path d="M4 5 Q6 6 6.5 8 M12 3.5 Q11 6 9.5 7" stroke="#1a1a1a" stroke-width="0.8" fill="none"/></svg>
<svg class="a" style="left:12px;top:297px" width="16" height="16" viewBox="0 0 16 16" ><path d="M1 14 Q3 7 6 8 Q9 9 11 5 Q12.5 2 15 1.5" stroke="#1a1a1a" stroke-width="1.1" fill="none"/></svg>
<svg class="a" style="left:12px;top:319px" width="16" height="16" viewBox="0 0 16 16" ><ellipse cx="8" cy="8.5" rx="6.8" ry="4.3" fill="#e4ecf4" stroke="#1a1a1a" stroke-width="1.3"/><rect x="0" y="7.2" width="2.6" height="2.6" fill="#1560d0"/><rect x="13.4" y="7.2" width="2.6" height="2.6" fill="#1560d0"/><rect x="6.7" y="3" width="2.6" height="2.6" fill="#1560d0"/></svg>
<svg class="a" style="left:12px;top:341px" width="16" height="16" viewBox="0 0 16 16" ><path d="M4 12 Q0.5 10.5 1.5 7 Q3 3.5 8.5 3.5 Q14 3.5 14.5 7" stroke="#1a1a1a" stroke-width="1.3" fill="none"/><rect x="2.7" y="10.8" width="2.6" height="2.6" fill="#1560d0"/><rect x="8" y="11.2" width="2.6" height="2.6" fill="#1560d0"/></svg>
<svg class="a" style="left:12px;top:363px" width="16" height="16" viewBox="0 0 16 16" ><path d="M5.5 0.5 H12 L15 3.5 V12 H5.5 Z" fill="#dfe8f2" stroke="#4a6a90"/><rect x="1" y="4.5" width="7" height="5" fill="#e8d858" stroke="#1d4f91"/><circle cx="9" cy="10" r="3.5" fill="#e8d858" stroke="#1d4f91"/><rect x="0" y="7" width="2.6" height="2.6" fill="#1560d0"/><path d="M12 16 L16 12 V16 Z" fill="#000"/></svg>
<svg class="a" style="left:12px;top:385px" width="16" height="16" viewBox="0 0 16 16" ><rect x="2.5" y="3.5" width="7" height="5" fill="#e8d858" stroke="#1d4f91"/><circle cx="10" cy="10.5" r="3.8" fill="#e8d858" stroke="#1d4f91"/><rect x="1" y="7" width="2.6" height="2.6" fill="#1560d0"/></svg>
<svg class="a" style="left:12px;top:407px" width="16" height="16" viewBox="0 0 16 16" ><rect x="7" y="7.5" width="2.6" height="2.6" fill="#1560d0"/></svg>
<svg class="a" style="left:12px;top:429px" width="16" height="16" viewBox="0 0 16 16" ><rect x="3" y="3" width="10" height="10" fill="#fff"/><path d="M3 8 L8 3 M3 12 L12 3 M6 13 L13 6 M10 13 L13 10" stroke="#1d4f91" stroke-width="0.9"/><path d="M0 3.5 H16 M0 12.5 H16 M3.5 0 V16 M12.5 0 V16" stroke="#1d3f70" stroke-width="1.3"/></svg>
<svg class="a" style="left:12px;top:451px" width="16" height="16" viewBox="0 0 16 16" ><defs><linearGradient id="gg" x1="0" y1="0" x2="1" y2="1"><stop offset="0" stop-color="#1a2a5a"/><stop offset="0.5" stop-color="#3a4a6a"/><stop offset="1" stop-color="#d8c050"/></linearGradient></defs><rect x="3" y="3" width="10" height="10" fill="url(#gg)"/><path d="M0 3.5 H16 M0 12.5 H16 M3.5 0 V16 M12.5 0 V16" stroke="#111" stroke-width="1.3"/></svg>
<svg class="a" style="left:12px;top:473px" width="16" height="16" viewBox="0 0 16 16" ><path d="M0.5 1.5 H10 L15.5 7 V13.5 H0.5 Z" fill="#d4e2f0" stroke="#1d4f91" stroke-width="1.1"/><ellipse cx="7" cy="7.5" rx="3.5" ry="3" fill="#eef4fa" stroke="#1d4f91"/></svg>
<svg class="a" style="left:12px;top:495px" width="16" height="16" viewBox="0 0 16 16" ><rect x="0.5" y="0.5" width="14" height="12" fill="#7a9ad0" stroke="#4a6aa0"/><rect x="0.5" y="0.5" width="14" height="2.5" fill="#3a6ac8"/><g fill="#fff"><rect x="2" y="4" width="3" height="2.2"/><rect x="6" y="4" width="3" height="2.2"/><rect x="10" y="4" width="3" height="2.2"/><rect x="2" y="7" width="3" height="2.2"/><rect x="6" y="7" width="3" height="2.2"/><rect x="10" y="7" width="3" height="2.2"/><rect x="2" y="10" width="3" height="2"/><rect x="6" y="10" width="3" height="2"/><rect x="10" y="10" width="3" height="2"/></g></svg>
<svg class="a" style="left:12px;top:517px" width="16" height="16" viewBox="0 0 16 16" ><text x="7.5" y="15" font-family="Liberation Sans" font-size="18" fill="#111" text-anchor="middle">A</text></svg>
<svg class="a" style="left:38px;top:121px" width="16" height="16" viewBox="0 0 16 16" ><path d="M5 10 L13 2 Q14.5 1 15.5 2.5 L7.5 11.5 Z" fill="#f0c828" stroke="#3a5aa0" stroke-width="0.7"/><path d="M5 10 L7.5 11.5 L9.5 9 L7 7.5 Z" fill="#fff" stroke="#3a5aa0" stroke-width="0.5"/><path d="M2.5 12.5 L5 10 L7.5 11.5 L5 14 Q3 14 2.5 12.5 Z" fill="#e86858"/><path d="M0 14.5 H16" stroke="#333" stroke-width="0.9"/></svg>
<svg class="a" style="left:38px;top:143px" width="16" height="16" viewBox="0 0 16 16" ><circle cx="4.5" cy="4.5" r="3.3" fill="#d0d8e0" stroke="#1a1a1a" stroke-width="1.1"/><circle cx="10" cy="11" r="3.6" fill="#d0d8e0" stroke="#1a1a1a" stroke-width="1.1"/><circle cx="11.5" cy="13" r="3" fill="#e0e6ee" stroke="#1a1a1a" stroke-width="1"/><path d="M7 2 Q12 0.5 13 5" stroke="#1d4f91" stroke-width="1.4" fill="none"/><path d="M11 4 L15 4.5 L12.5 7.5 Z" fill="#1d4f91"/></svg>
<svg class="a" style="left:38px;top:165px" width="16" height="16" viewBox="0 0 16 16" ><path d="M1.5 14.5 L6 3 V14.5 Z M14.5 14.5 L10 3 V14.5 Z" fill="#fff" stroke="#1a1a1a" stroke-width="1.1"/><path d="M8 0 V16" stroke="#1560d0" stroke-width="1.3"/></svg>
<svg class="a" style="left:38px;top:187px" width="16" height="16" viewBox="0 0 16 16" ><path d="M2 14 V9 Q2 6 5 6 Q5 1.5 8.5 1.5 Q12 1.5 12 6 V8 H15 V14 Z" fill="#fff" stroke="#1a1a1a" stroke-width="1.1"/><path d="M4 12 V10 Q4 8 7 8 V5 Q7 3.5 8.5 3.5 Q10 3.5 10 5 V10 H13 V12 Z" fill="none" stroke="#1560d0" stroke-width="1.5"/></svg>
<svg class="a" style="left:38px;top:209px" width="16" height="16" viewBox="0 0 16 16" ><g fill="#e8eef4" stroke="#1a1a1a" stroke-width="1.1"><rect x="1.5" y="1.5" width="5.5" height="5.5"/><rect x="9.5" y="1.5" width="5.5" height="5.5"/><rect x="1.5" y="9.5" width="5.5" height="5.5"/><rect x="9.5" y="9.5" width="5.5" height="5.5"/></g></svg>
<svg class="a" style="left:38px;top:231px" width="16" height="16" viewBox="0 0 16 16" ><path d="M8 0 L11.5 4 H9.2 V6.8 H12 V4.5 L16 8 L12 11.5 V9.2 H9.2 V12 H11.5 L8 16 L4.5 12 H6.8 V9.2 H4 V11.5 L0 8 L4 4.5 V6.8 H6.8 V4 H4.5 Z" fill="#3a6ab8"/></svg>
<svg class="a" style="left:38px;top:253px" width="16" height="16" viewBox="0 0 16 16" ><path d="M5 3.5 A6 6 0 1 0 11 3.5" stroke="#3a6ab8" stroke-width="2.2" fill="none"/><path d="M3 0.5 L8.5 1.5 L4.5 6.5 Z" fill="#3a6ab8"/></svg>
<svg class="a" style="left:38px;top:275px" width="16" height="16" viewBox="0 0 16 16" ><rect x="2.5" y="1.5" width="12" height="13" fill="#e4ecf4" stroke="#1d4f91"/><path d="M2.5 7.5 H8.5 V14.5" fill="none" stroke="#1a1a1a" stroke-dasharray="1 1"/></svg>
<svg class="a" style="left:38px;top:297px" width="16" height="16" viewBox="0 0 16 16" ><path d="M1.5 1.5 H6 M1.5 1.5 V14.5 H6" stroke="#1a1a1a" stroke-width="1" fill="none"/><path d="M6.5 1.5 H9 L14.5 14.5 H6.5 Z" fill="#dfe8f2" stroke="#1a1a1a" stroke-width="1"/><path d="M6.5 1.5 V14.5" stroke="#1a1a1a" stroke-dasharray="1 1"/></svg>
<svg class="a" style="left:38px;top:319px" width="16" height="16" viewBox="0 0 16 16" ><path d="M0 8.5 H6" stroke="#111" stroke-width="1.2"/><path d="M9 8.5 H16" stroke="#1560d0" stroke-width="1.2" stroke-dasharray="2 1.3"/><path d="M4 15 L12 2" stroke="#1560d0" stroke-width="1.3"/></svg>
<svg class="a" style="left:38px;top:341px" width="16" height="16" viewBox="0 0 16 16" ><path d="M0 9.5 H4" stroke="#111" stroke-width="1.2"/><path d="M5 9.5 H11" stroke="#1560d0" stroke-width="1.2" stroke-dasharray="2 1.3"/><path d="M9 15 L15 3" stroke="#1560d0" stroke-width="1.3"/></svg>
<svg class="a" style="left:38px;top:363px" width="16" height="16" viewBox="0 0 16 16" ><rect x="1.5" y="3.5" width="13" height="10" fill="#e4ecf4" stroke="#1a1a1a" stroke-width="1.1"/><rect x="7" y="2" width="3" height="3" fill="#1560d0"/></svg>
<svg class="a" style="left:38px;top:385px" width="16" height="16" viewBox="0 0 16 16" ><path d="M1.5 3.5 V13.5 H14.5 V3.5 M1.5 3.5 H4 M12 3.5 H14.5" fill="#e4ecf4" stroke="#1a1a1a" stroke-width="1.1"/><rect x="3.5" y="2" width="3" height="3" fill="#1560d0"/><rect x="10" y="2" width="3" height="3" fill="#1560d0"/></svg>
<svg class="a" style="left:38px;top:407px" width="16" height="16" viewBox="0 0 16 16" ><path d="M0 8 H16" stroke="#1a2a4a" stroke-width="1.4"/><path d="M2.5 4 L7.5 8 L2.5 12 Z M13.5 4 L8.5 8 L13.5 12 Z" fill="#1a2a4a"/></svg>
<svg class="a" style="left:38px;top:429px" width="16" height="16" viewBox="0 0 16 16" ><path d="M1.5 16 V2 H16" stroke="#111" stroke-width="1" fill="none" stroke-dasharray="1 1"/><path d="M2 15 V8 L8 2.5 H16" stroke="#111" stroke-width="1.2" fill="none"/><path d="M2 8 L8 2.5" stroke="#1560d0" stroke-width="1.6"/></svg>
<svg class="a" style="left:38px;top:451px" width="16" height="16" viewBox="0 0 16 16" ><path d="M1.5 16 V2 H16" stroke="#111" stroke-width="1" fill="none" stroke-dasharray="1 1"/><path d="M2 16 V10 Q2 2.5 10 2.5 H16" stroke="#111" stroke-width="1.2" fill="none"/><path d="M2 10 Q2 2.5 10 2.5" stroke="#1560d0" stroke-width="1.6" fill="none"/></svg>
<svg class="a" style="left:38px;top:473px" width="16" height="16" viewBox="0 0 16 16" ><path d="M1 13 L8 6 L11 9 L4 16 Z" fill="#e02828" stroke="#701010" stroke-width="0.6"/><path d="M3 11 L5 13 M5 9 L7 11" stroke="#f0d020" stroke-width="1"/><path d="M10 1 L11 5 L15 3 L12.5 6.5 L16 8 L12 8.5 M13 0 L12.5 2" stroke="#e8c000" stroke-width="1.1" fill="none"/><path d="M8 2 L9 4 M14 10 L15 12" stroke="#3a5aa0" stroke-width="0.8"/></svg>
<div class="a" style="left:950px;top:106px;width:28px;height:462px;background:#f0f0f0"></div>
<div class="a" style="left:950px;top:107px;width:1px;height:446px;background:#fff"></div>
<div class="a" style="left:953px;top:107px;width:25px;height:104px;border-right:1px solid #a0a0a0;border-bottom:1px solid #a0a0a0;box-shadow:inset 1px 1px 0 #fff"></div>
<div class="a" style="left:956px;top:111px;width:20px;height:1px;background:#a0a0a0"></div>
<div class="a" style="left:956px;top:112px;width:20px;height:1px;background:#fff"></div>
<div class="a" style="left:956px;top:115px;width:20px;height:1px;background:#a0a0a0"></div>
<div class="a" style="left:956px;top:116px;width:20px;height:1px;background:#fff"></div>
<svg class="a" style="left:957px;top:121px" width="16" height="16" viewBox="0 0 16 16" ><rect x="0.5" y="0.5" width="8" height="6" fill="#eef4fa" stroke="#4a78b0"/><rect x="7.5" y="9.5" width="8" height="6" fill="#eef4fa" stroke="#4a78b0"/><rect x="3.5" y="3.5" width="9" height="9" fill="#5a88c0" stroke="#2f5a90"/></svg>
<svg class="a" style="left:957px;top:143px" width="16" height="16" viewBox="0 0 16 16" ><rect x="0.5" y="0.5" width="8" height="7" fill="#eef4fa" stroke="#4a78b0"/><rect x="3.5" y="3.5" width="9" height="9" fill="#5a88c0" stroke="#2f5a90"/><rect x="7.5" y="9.5" width="8" height="6" fill="#eef4fa" stroke="#4a78b0"/></svg>
<svg class="a" style="left:957px;top:165px" width="16" height="16" viewBox="0 0 16 16" ><rect x="1.5" y="0.5" width="11" height="10" fill="#5a88c0" stroke="#2f5a90"/><rect x="4.5" y="5.5" width="11" height="10" fill="#eef4fa" stroke="#4a78b0" fill-opacity="0.5"/></svg>
<svg class="a" style="left:957px;top:187px" width="16" height="16" viewBox="0 0 16 16" ><rect x="1.5" y="0.5" width="11" height="10" fill="#5a88c0" stroke="#2f5a90"/><rect x="4.5" y="5.5" width="11" height="10" fill="#dfe9f3" stroke="#4a78b0"/></svg>
<div class="a" style="left:62px;top:107px;width:888px;height:1px;background:#696969"></div>
<div class="a" style="left:62px;top:108px;width:888px;height:445px;background:#000"></div>
<svg class="a" style="left:0;top:0" width="986" height="661" viewBox="0 0 986 661"><defs><clipPath id="cv"><rect x="62" y="108" width="888" height="445"/></clipPath></defs><g clip-path="url(#cv)" shape-rendering="crispEdges"><path d="M131.86 491.50 A231.6 231.6 0 1 1 548.74 491.50" stroke="#fff" fill="none" stroke-width="1"/><path d="M131.86 491.50 A231.6 231.6 0 0 0 548.74 491.50" stroke="#fff" fill="none" stroke-width="1" stroke-dasharray="6 2 1.5 2"/><path d="M134 491.5 H548" stroke="#fff" stroke-width="1" stroke-dasharray="3 3"/><path d="M134 491 L548.5 289.5" stroke="#fff" stroke-width="1"/><path d="M548.5 289.5 V491 M340.5 390.5 V491 M340.5 390.5 H548.5" stroke="#fff" stroke-width="1"/><rect x="70.5" y="533.5" width="9" height="9" fill="none" stroke="#fff"/><path d="M74.5 533 V495 M80 538.5 H117" stroke="#fff"/><path d="M74.5 485.5 L70.5 495.5 H78.5 Z M73 493 L76 493" stroke="#fff" fill="none"/><path d="M117.5 534.5 L127.5 538.5 L117.5 542.5 Z M120 536.5 L122 540.5" stroke="#fff" fill="none"/><path d="M72 467 L76.5 472.5 L81 467 M76.5 472.5 V478" stroke="#fff" fill="none"/><path d="M135 534 L144 543 M144 534 L135 543" stroke="#fff" fill="none"/><rect x="364.5" y="547.5" width="6" height="4" fill="none" stroke="#fff"/></g></svg>
<div class="a" style="left:62px;top:553px;width:888px;height:14px;background:#f0f0f0"></div>
<div class="a" style="left:8px;top:567px;width:942px;height:1px;background:#e2e2e2"></div>
<div class="a" style="left:8px;top:568px;width:942px;height:1px;background:#fff"></div>
<div class="a" style="left:62px;top:553px;width:18px;height:13px;background:#f0f0f0;border-right:1px solid #a0a0a0;box-shadow:inset 1px 0 0 #fff"></div>
<svg class="a" style="left:63px;top:553px" width="16" height="13" viewBox="0 0 16 13" ><path d="M4.5 3 V12" stroke="#000" stroke-width="1.2"/><path d="M11 3 L5.5 7.5 L11 12 Z" fill="#000"/></svg>
<div class="a" style="left:80px;top:553px;width:18px;height:13px;background:#f0f0f0;border-right:1px solid #a0a0a0;box-shadow:inset 1px 0 0 #fff"></div>
<svg class="a" style="left:81px;top:553px" width="16" height="13" viewBox="0 0 16 13" ><path d="M11 3 L5.5 7.5 L11 12 Z" fill="#000"/></svg>
<div class="a" style="left:98px;top:553px;width:18px;height:13px;background:#f0f0f0;border-right:1px solid #a0a0a0;box-shadow:inset 1px 0 0 #fff"></div>
<svg class="a" style="left:99px;top:553px" width="16" height="13" viewBox="0 0 16 13" ><path d="M6 3 L11.5 7.5 L6 12 Z" fill="#000"/></svg>
<div class="a" style="left:116px;top:553px;width:18px;height:13px;background:#f0f0f0;border-right:1px solid #a0a0a0;box-shadow:inset 1px 0 0 #fff"></div>
<svg class="a" style="left:117px;top:553px" width="16" height="13" viewBox="0 0 16 13" ><path d="M5 3 L10.5 7.5 L5 12 Z" fill="#000"/><path d="M12 3 V12" stroke="#000" stroke-width="1.2"/></svg>
<svg class="a" style="left:0;top:0" width="986" height="661" viewBox="0 0 986 661"><path d="M137 553 L142 566 H172.5 L177 553 Z" fill="#000"/><path d="M176 553 L180 566 H213 L217 553" fill="#f4f4f4" stroke="#000" stroke-width="1"/><path d="M217 553 L221 566 H256 L260 553" fill="#f4f4f4" stroke="#000" stroke-width="1"/><path d="M137.5 553 L142.5 566" stroke="#fff"/></svg>
<div class="a t" style="left:145px;top:554px;font-size:12px;color:#fff">模型</div>
<div class="a t" style="left:180px;top:554px;font-size:12px;color:#000;letter-spacing:-0.5px">布局1</div>
<div class="a t" style="left:222px;top:554px;font-size:12px;color:#000;letter-spacing:-0.5px">布局2</div>
<div class="a" style="left:8px;top:569px;width:970px;height:84px;background:#f0f0f0"></div>
<div class="a" style="left:8px;top:567px;width:942px;height:1px;background:#e2e2e2"></div>
<div class="a" style="left:8px;top:568px;width:942px;height:1px;background:#fff"></div>
<div class="a" style="left:8px;top:573px;width:970px;height:1px;background:#a0a0a0"></div>
<div class="a" style="left:8px;top:574px;width:970px;height:1px;background:#696969"></div>
<div class="a" style="left:8px;top:575px;width:970px;height:1px;background:#fafafa"></div>
<div class="a" style="left:14px;top:583px;width:1px;height:42px;background:#fff"></div>
<div class="a" style="left:15px;top:583px;width:1px;height:42px;background:#a0a0a0"></div>
<div class="a" style="left:18px;top:583px;width:1px;height:42px;background:#fff"></div>
<div class="a" style="left:19px;top:583px;width:1px;height:42px;background:#a0a0a0"></div>
<div class="a" style="left:23px;top:584px;width:948px;height:44px;background:#fff;border-left:1px solid #a0a0a0;border-top:1px solid #a0a0a0"></div>
<div class="a" style="left:24px;top:585px;width:947px;height:1px;background:#696969"></div>
<div class="a" style="left:24px;top:585px;width:1px;height:43px;background:#696969"></div>
<div class="a" style="left:25px;top:608px;width:929px;height:1px;background:#a0a0a0"></div>
<div class="a" style="left:954px;top:586px;width:17px;height:22px;background:#f0f0f0"></div>
<svg class="a" style="left:956px;top:590px" width="12" height="16" viewBox="0 0 12 16" ><path d="M1.5 6 L6 1.5 L10.5 6 M1.5 10 L6 14.5 L10.5 10" stroke="#555" stroke-width="1.6" fill="none"/></svg>
<div class="a" style="left:953px;top:609px;width:25px;height:19px;background:#f0f0f0"></div>
<div class="a" style="left:912px;top:610px;width:9px;height:14px;background:#c8c8c8"></div>
<svg class="a" style="left:939px;top:612px" width="8" height="12" viewBox="0 0 8 12" ><path d="M1.5 1.5 L6 6 L1.5 10.5" stroke="#555" stroke-width="1.8" fill="none"/></svg>
<div class="a t" style="left:27px;top:586px;font-size:12.5px;color:#000;letter-spacing:3px;font-size:13px;">命令<span style="margin-left:0px;font-weight:bold;letter-spacing:0">:</span></div>
<div class="a t" style="left:27px;top:610px;font-size:12.5px;color:#000;letter-spacing:3px;font-size:13px;">命令<span style="margin-left:0px;font-weight:bold;letter-spacing:0">:</span></div>
<div class="a" style="left:8px;top:629px;width:970px;height:1px;background:#a0a0a0"></div>
<div class="a" style="left:8px;top:630px;width:970px;height:1px;background:#fff"></div>
<div class="a" style="left:13px;top:635px;width:186px;height:17px;border:1px solid #a0a0a0;border-right-color:#fff;border-bottom-color:#fff;background:#f0f0f0"></div>
<div class="a t" style="left:14px;top:639px;font-family:'Liberation Mono',monospace;font-size:11px;color:#000;letter-spacing:-0.6px">3.1558, 2.3123, 0.0000</div>
<div class="a" style="left:203px;top:635px;width:28px;height:17px;border-left:1px solid #fff;border-top:1px solid #fff;border-right:1px solid #a0a0a0;border-bottom:1px solid #a0a0a0;background:#f0f0f0"></div>
<div class="a t" style="left:205px;top:638px;font-size:12.3px;color:#000;letter-spacing:-0.4px">捕捉</div>
<div class="a" style="left:235px;top:635px;width:28px;height:17px;border-left:1px solid #fff;border-top:1px solid #fff;border-right:1px solid #a0a0a0;border-bottom:1px solid #a0a0a0;background:#f0f0f0"></div>
<div class="a t" style="left:237px;top:638px;font-size:12.3px;color:#000;letter-spacing:-0.4px">栅格</div>
<div class="a" style="left:268px;top:635px;width:27px;height:17px;border-left:1px solid #fff;border-top:1px solid #fff;border-right:1px solid #a0a0a0;border-bottom:1px solid #a0a0a0;background:#f0f0f0"></div>
<div class="a t" style="left:270px;top:638px;font-size:12.3px;color:#000;letter-spacing:-0.4px">正交</div>
<div class="a" style="left:300px;top:635px;width:28px;height:17px;border-left:1px solid #fff;border-top:1px solid #fff;border-right:1px solid #a0a0a0;border-bottom:1px solid #a0a0a0;background:#f0f0f0"></div>
<div class="a t" style="left:302px;top:638px;font-size:12.3px;color:#000;letter-spacing:-0.4px">极轴</div>
<div class="a" style="left:331px;top:635px;width:53px;height:17px;border-left:1px solid #000;border-top:1px solid #000;border-right:1px solid #fff;border-bottom:1px solid #fff;background:#f0f0f0"></div>
<div class="a t" style="left:333px;top:638px;font-size:12.3px;color:#000;letter-spacing:-0.4px">对象捕捉</div>
<div class="a" style="left:387px;top:635px;width:53px;height:17px;border-left:1px solid #000;border-top:1px solid #000;border-right:1px solid #fff;border-bottom:1px solid #fff;background:#f0f0f0"></div>
<div class="a t" style="left:389px;top:638px;font-size:12.3px;color:#000;letter-spacing:-0.4px">对象追踪</div>
<div class="a" style="left:443px;top:635px;width:29px;height:17px;border-left:1px solid #000;border-top:1px solid #000;border-right:1px solid #fff;border-bottom:1px solid #fff;background:#f0f0f0"></div>
<div class="a t" style="left:445px;top:640px;font-family:'Liberation Mono',monospace;font-size:11px;color:#000;letter-spacing:-0.6px">DUCS</div>
<div class="a" style="left:475px;top:635px;width:23px;height:17px;border-left:1px solid #000;border-top:1px solid #000;border-right:1px solid #fff;border-bottom:1px solid #fff;background:#f0f0f0"></div>
<div class="a t" style="left:477px;top:640px;font-family:'Liberation Mono',monospace;font-size:11px;color:#000;letter-spacing:-0.6px">DYN</div>
<div class="a" style="left:501px;top:635px;width:28px;height:17px;border-left:1px solid #fff;border-top:1px solid #fff;border-right:1px solid #a0a0a0;border-bottom:1px solid #a0a0a0;background:#f0f0f0"></div>
<div class="a t" style="left:503px;top:638px;font-size:12.3px;color:#000;letter-spacing:-0.4px">线宽</div>
<div class="a" style="left:533px;top:635px;width:28px;height:17px;border-left:1px solid #000;border-top:1px solid #000;border-right:1px solid #fff;border-bottom:1px solid #fff;background:#f0f0f0"></div>
<div class="a t" style="left:535px;top:638px;font-size:12.3px;color:#000;letter-spacing:-0.4px">模型</div>
<div class="a" style="left:859px;top:634px;width:1px;height:18px;background:#a0a0a0"></div>
<div class="a" style="left:860px;top:634px;width:1px;height:18px;background:#fff"></div>
<svg class="a" style="left:862px;top:635px" width="18" height="16" viewBox="0 0 18 16" ><path d="M2 12 Q1 6 6 3" stroke="#8aa0c0" stroke-width="1.6" fill="none"/><path d="M3 5 L10 11" stroke="#6a80a8" stroke-width="1.4"/><path d="M11 1 L6 6" stroke="#8aa8d0" stroke-width="1.2"/><path d="M0.5 14.5 H8" stroke="#b0c0d8" stroke-width="1.2"/><path d="M11 5 L16.5 15.5 H5.5 Z" fill="#f8e020" stroke="#222" stroke-width="0.9"/><path d="M11 8 V12 M11 13 V14.5" stroke="#000" stroke-width="1.5"/></svg>
<svg class="a" style="left:883px;top:636px" width="16" height="15" viewBox="0 0 16 15" ><path d="M6.5 6 V4 Q6.5 0.8 10.2 0.8 Q14 0.8 14 4 V7" stroke="#222" stroke-width="2.6" fill="none"/><path d="M6.5 6 V4 Q6.5 0.8 10.2 0.8 Q14 0.8 14 4 V7" stroke="#f0c030" stroke-width="1.4" fill="none"/><rect x="0.5" y="6" width="10" height="8.5" rx="1.5" fill="#c8a020" stroke="#222" stroke-width="0.9"/><path d="M1 8.5 H10 M1 11 H10 M1 13 H10" stroke="#f8e070" stroke-width="0.9"/></svg>
<svg class="a" style="left:903px;top:636px" width="17" height="15" viewBox="0 0 17 15" ><path d="M0.5 0.5 H10 L13.5 4 V14.5 H0.5 Z" fill="#2a4a80" stroke="#1a2f60"/><path d="M10 0.5 V4 H13.5" fill="#c8d4e4"/><path d="M5 3 V14 M2 6 H9" stroke="#fff" stroke-width="1.2"/><circle cx="5" cy="4.5" r="1.8" fill="#fff"/><circle cx="12" cy="11" r="4.5" fill="#28b040" stroke="#fff" stroke-width="0.6"/><path d="M9.8 11 L11.5 12.8 L14.3 9.5" stroke="#fff" stroke-width="1.5" fill="none"/></svg>
<svg class="a" style="left:928px;top:645px" width="8" height="5" viewBox="0 0 8 5" ><path d="M0 0 H8 L4 4.5 Z" fill="#000"/></svg>
<svg class="a" style="left:945px;top:634px" width="16" height="16" viewBox="0 0 16 16" ><defs><linearGradient id="cs" x1="0" y1="0" x2="1" y2="1"><stop offset="0" stop-color="#b8cee8"/><stop offset="1" stop-color="#eef4fa"/></linearGradient></defs><rect x="0" y="0" width="16" height="16" fill="#1d3f80"/><rect x="1" y="1" width="14" height="14" fill="#fff"/><rect x="2" y="2" width="12" height="12" fill="url(#cs)"/></svg>
<svg class="a" style="left:966px;top:642px" width="10" height="10" viewBox="0 0 10 10" ><g fill="#b0b0b0"><rect x="7" y="1" width="2" height="2"/><rect x="4" y="4" width="2" height="2"/><rect x="7" y="4" width="2" height="2"/><rect x="1" y="7" width="2" height="2"/><rect x="4" y="7" width="2" height="2"/><rect x="7" y="7" width="2" height="2"/></g></svg>
<div class="a" style="left:178px;top:654px;width:801px;height:7px;background:#fff"></div>
<svg class="a" style="left:0;top:0" width="986" height="661" viewBox="0 0 986 661"><ellipse cx="279" cy="664" rx="15" ry="12" fill="#5ac24a"/><path d="M306.5 654 V661" stroke="#ddd"/><path d="M887.5 654 V661 M977.5 654 V661" stroke="#ddd"/><path d="M905 655.5 L909.5 660 L914 655.5 Z" fill="#8a8a8a"/></svg>
<div class="a t" style="left:315px;top:652px;font-size:12px;color:#333;clip-path:inset(2px 0 0 0)"><span style="color:#1d4f91">●</span> 输入“中国”通过是以“如何”、</div>
<div class="a" style="left:363px;top:657px;width:60px;height:4px;border:1px solid #bbb;border-bottom:none"></div>
<div class="a t" style="left:979px;top:634px;font-size:18px;color:#999;clip-path:inset(0 0 0 0)">语</div>
<svg class="a" style="left:0;top:0" width="986" height="661" viewBox="0 0 986 661"><path d="M452.8 550.8 L385 620.5 L388.2 623 L369.8 628.9 L377.3 611.8 L380.2 614.2 Z" fill="#fd3535"/></svg>
<svg class="a" style="left:0;top:0" width="986" height="661" viewBox="0 0 986 661"><path d="M740.5 550.5 H900.5 Q912.5 550.5 912.5 562.5 V611.5 Q912.5 623.5 900.5 623.5 H870.5 V641.5 L855 623.5 H740.5 Q728.5 623.5 728.5 611.5 V562.5 Q728.5 550.5 740.5 550.5 Z" fill="#ffffe1" stroke="#000" stroke-width="1.2"/><circle cx="746" cy="567" r="7.5" fill="#2a5fc0" stroke="#8a9ab8"/><circle cx="744" cy="564" r="4" fill="#6a9fe8" opacity="0.6"/><text x="746" y="572" font-family="Liberation Serif" font-weight="bold" font-size="12" fill="#fff" text-anchor="middle">i</text><rect x="888.5" y="559.5" width="15" height="15" fill="#f6f6f6" stroke="#a0a0a0"/><path d="M892 563 L900 571 M900 563 L892 571" stroke="#000" stroke-width="2.2"/></svg>
<div class="a t" style="left:764px;top:560px;font-size:12.5px;font-weight:bold;color:#000;letter-spacing:0.8px">通讯中心</div>
<div class="a t" style="left:744px;top:581px;font-size:12.5px;color:#000;letter-spacing:-0.25px">使软件保持最新的简单方法。</div>
<div class="a t" style="left:744px;top:599px;font-size:12.5px;color:#0000ff;text-decoration:underline;letter-spacing:-0.4px">单击此处。</div>
<svg class="a" style="left:0;top:0" width="986" height="661" viewBox="0 0 986 661"><g fill="#fff" fill-opacity="0.68" stroke="#a8a8a0" stroke-opacity="0.35" stroke-width="1"><text x="755" y="610" font-family="Liberation Sans" font-weight="bold" font-size="29" letter-spacing="-0.5">Bai</text><ellipse cx="823.5" cy="575" rx="6.5" ry="7"/><ellipse cx="836" cy="564.5" rx="6.8" ry="8.5"/><ellipse cx="851" cy="565.5" rx="6.8" ry="8.5"/><ellipse cx="862" cy="577.5" rx="5.8" ry="6.5"/><path d="M820 590 Q822 579 841 578 Q860 579 862.5 590 V600 Q862 609 841 609 Q820 609 820 600 Z"/><text x="870" y="608" font-family="Liberation Sans" font-weight="bold" font-size="29" stroke-width="0.6" stroke-opacity="0.3" fill-opacity="0.8">经验</text><text x="757" y="632" font-family="Liberation Sans" font-size="21" letter-spacing="0.2">jingyan.baidu.com</text></g><text x="823" y="606" font-family="Liberation Sans" font-weight="bold" font-size="21" letter-spacing="-1" fill="none" stroke="#b8b8a8" stroke-opacity="0.45" stroke-width="1">du</text></svg>
</body></html>
